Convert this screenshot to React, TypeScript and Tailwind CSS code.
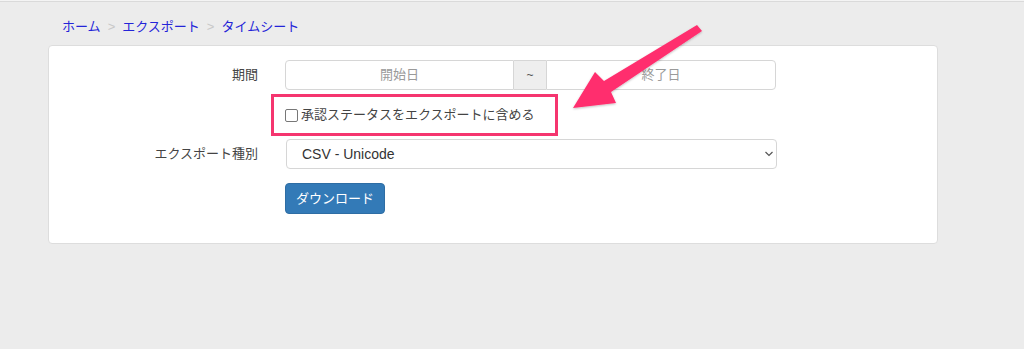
import React from 'react';

const font = { fontFamily: '"Liberation Sans", "Noto Sans CJK JP", sans-serif' };

export default function App() {
    return (
        <div className="relative h-[349px] w-[1024px] overflow-hidden bg-[#ececec] text-[#333]" style={font}>
            {/* top edge */}
            <div className="h-[2px] bg-[#f4f4f4] border-b border-[#dadada]" />

            <div className="pl-[48px]">
                {/* Breadcrumb */}
                <nav className="h-[43px] pt-[7px] pl-[14px] flex items-center text-[13px] text-[#2424d8]">
                    <span>ホーム</span>
                    <span className="text-[#c8c8c8] px-[7px]">&gt;</span>
                    <span>エクスポート</span>
                    <span className="text-[#c8c8c8] px-[7px]">&gt;</span>
                    <span>タイムシート</span>
                </nav>

                {/* Panel */}
                <div className="w-[890px] bg-white border border-[#dddddd] rounded-[4px] pt-[14px] pb-[29px] text-[13px]">
                    {/* 期間 */}
                    <div className="flex items-center">
                        <label className="w-[209px] text-right text-[#444]">期間</label>
                        <div className="ml-[27px] flex w-[491px] h-[30px]">
                            <div className="w-[229px] border border-[#d6d6d6] rounded-l-[4px] flex items-center justify-center text-[#9a9a9a]">開始日</div>
                            <div className="w-[32px] border-y border-[#d6d6d6] bg-[#eeeeee] flex items-center justify-center text-[#555] text-[12px]">~</div>
                            <div className="flex-1 border border-[#d6d6d6] rounded-r-[4px] flex items-center justify-center text-[#9a9a9a]">終了日</div>
                        </div>
                    </div>

                    {/* 承認ステータス */}
                    <div className="relative ml-[236px] mt-[4px] h-[42px] flex items-center">
                        <div className="absolute left-[-14px] top-0 w-[287px] h-[42px] border-[3px] border-[#f5356f]" />
                        <span className="w-[13px] h-[13px] border border-[#777] rounded-[2px] bg-white" />
                        <span className="ml-[3px] text-[#444]">承認ステータスをエクスポートに含める</span>
                    </div>

                    {/* エクスポート種別 */}
                    <div className="flex items-center mt-[3px]">
                        <label className="w-[209px] text-right text-[#444]">エクスポート種別</label>
                        <div className="relative ml-[28px] w-[491px] h-[30px]">
                            <select className="appearance-none w-full h-full border border-[#d6d6d6] rounded-[4px] pl-[15px] text-[14px] text-[#333] bg-white outline-none" style={font}>
                                <option>CSV - Unicode</option>
                            </select>
                            <svg className="absolute right-[3px] top-[11px] pointer-events-none" width="10" height="8" viewBox="0 0 10 8">
                                <path d="M1.5 2l3.5 3.5L8.5 2" fill="none" stroke="#555" strokeWidth="1.2" />
                            </svg>
                        </div>
                    </div>

                    {/* Download */}
                    <div className="ml-[236px] mt-[14px]">
                        <button className="h-[31px] w-[100px] rounded-[4px] bg-[#337ab7] border border-[#2e6da4] text-white text-[13px]">ダウンロード</button>
                    </div>
                </div>
            </div>

            {/* Annotation arrow */}
            <svg className="absolute inset-0 pointer-events-none" width="1024" height="349" viewBox="0 0 1024 349">
                <defs>
                    <filter id="sh" x="-20%" y="-20%" width="140%" height="140%">
                        <feDropShadow dx="0" dy="1" stdDeviation="1.2" floodColor="#000" floodOpacity="0.25" />
                    </filter>
                </defs>
                <polygon
                    points="573,108 595,72 604,81 697,25 702,31 611,92 616,103"
                    fill="#ff2f6e"
                    filter="url(#sh)"
                />
            </svg>
        </div>
    );
}
